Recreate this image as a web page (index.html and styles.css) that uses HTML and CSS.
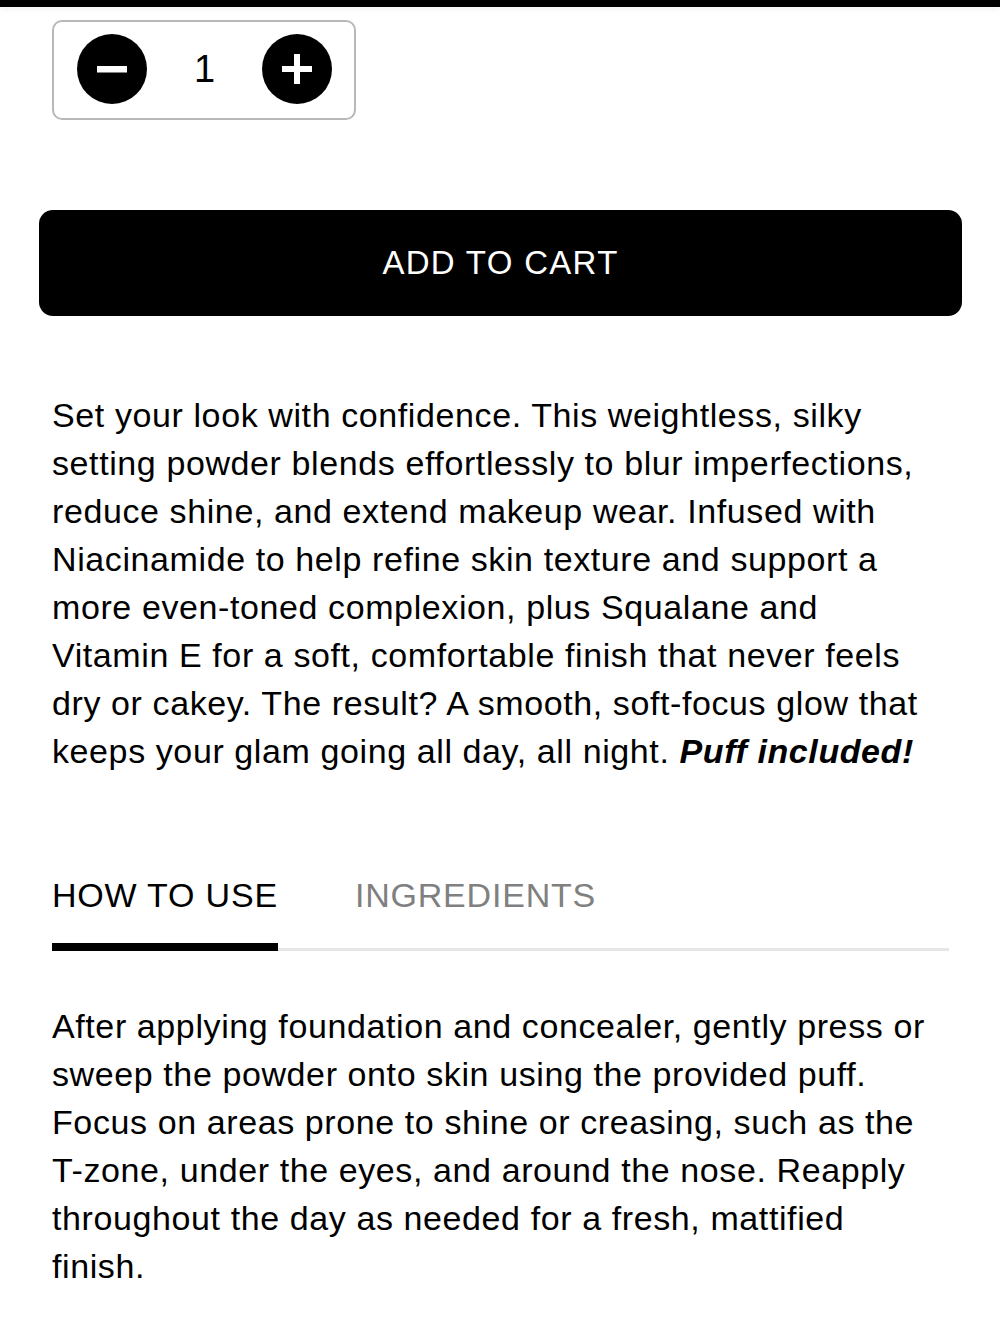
FILE: index.html
```html
<!DOCTYPE html>
<html lang="en">
<head>
<meta charset="utf-8">
<title>Setting Powder</title>
<link rel="stylesheet" href="styles.css">
</head>
<body>
<div class="topbar"></div>
<main class="page">
  <div class="qty">
    <button class="qty-btn" aria-label="Decrease">
      <svg viewBox="0 0 70 70" width="70" height="70"><circle cx="35" cy="35" r="35" fill="#000"/><rect x="20" y="32" width="30" height="6.5" fill="#fff"/></svg>
    </button>
    <span class="qty-val">1</span>
    <button class="qty-btn" aria-label="Increase">
      <svg viewBox="0 0 70 70" width="70" height="70"><circle cx="35" cy="35" r="35" fill="#000"/><rect x="20" y="32" width="30" height="6" fill="#fff"/><rect x="32" y="20" width="6" height="30" fill="#fff"/></svg>
    </button>
  </div>

  <button class="cart">ADD TO CART</button>

  <p class="desc">Set your look with confidence. This weightless, silky setting powder blends effortlessly to blur imperfections, reduce shine, and extend makeup wear. Infused with Niacinamide to help refine skin texture and support a more even-toned complexion, plus Squalane and Vitamin E for a soft, comfortable finish that never feels dry or cakey. The result? A smooth, soft-focus glow that keeps your glam going all day, all night. <strong><em>Puff included!</em></strong></p>

  <div class="tabs">
    <span class="tab active">HOW TO USE</span>
    <span class="tab">INGREDIENTS</span>
  </div>

  <p class="desc how">After applying foundation and concealer, gently press or sweep the powder onto skin using the provided puff. Focus on areas prone to shine or creasing, such as the T-zone, under the eyes, and around the nose. Reapply throughout the day as needed for a fresh, mattified finish.</p>
</main>
</body>
</html>
```

FILE: styles.css
```css
* { box-sizing: border-box; }
html, body { margin: 0; padding: 0; background: #fff; }
body {
  font-family: "Liberation Sans", Arial, Helvetica, sans-serif;
  color: #000;
}
.topbar {
  height: 7px;
  background: #000;
  box-shadow: 0 2px 6px rgba(0,0,0,0.06);
}
.page {
  padding: 13px 38px 40px 39px;
}
.qty {
  margin-left: 13px;
  width: 304px;
  height: 100px;
  border: 2px solid #b8b8b8;
  border-radius: 10px;
  display: flex;
  align-items: center;
  justify-content: space-between;
  padding: 0 22px 0 23px;
}
.qty-btn {
  border: 0;
  padding: 0;
  background: none;
  width: 70px;
  height: 70px;
  display: block;
  margin-top: -2px;
}
.qty-btn svg { display: block; }
.qty-val {
  font-size: 38px;
  line-height: 1;
  margin-top: -2px;
}
.cart {
  display: block;
  width: 100%;
  height: 106px;
  margin-top: 90px;
  border: 0;
  border-radius: 14px;
  background: #000;
  color: #fff;
  font-family: "Liberation Sans", Arial, Helvetica, sans-serif;
  font-size: 33px;
  letter-spacing: 1.3px;
  padding: 0;
}
.desc {
  margin: 75px 27px 0 13px;
  font-size: 34px;
  letter-spacing: 0.6px;
  line-height: 48px;
}
.desc strong { font-weight: 700; }
.tabs {
  margin: 100px 13px 0;
  display: flex;
  gap: 77px;
  border-bottom: 3px solid #e6e6e6;
}
.tab {
  font-size: 34px;
  letter-spacing: 0.8px;
  line-height: 40px;
  padding-bottom: 28px;
  color: #808080;
}
.tab.active {
  color: #000;
  border-bottom: 8px solid #000;
  margin-bottom: -3px;
}
.how {
  margin-top: 51px;
}
```
